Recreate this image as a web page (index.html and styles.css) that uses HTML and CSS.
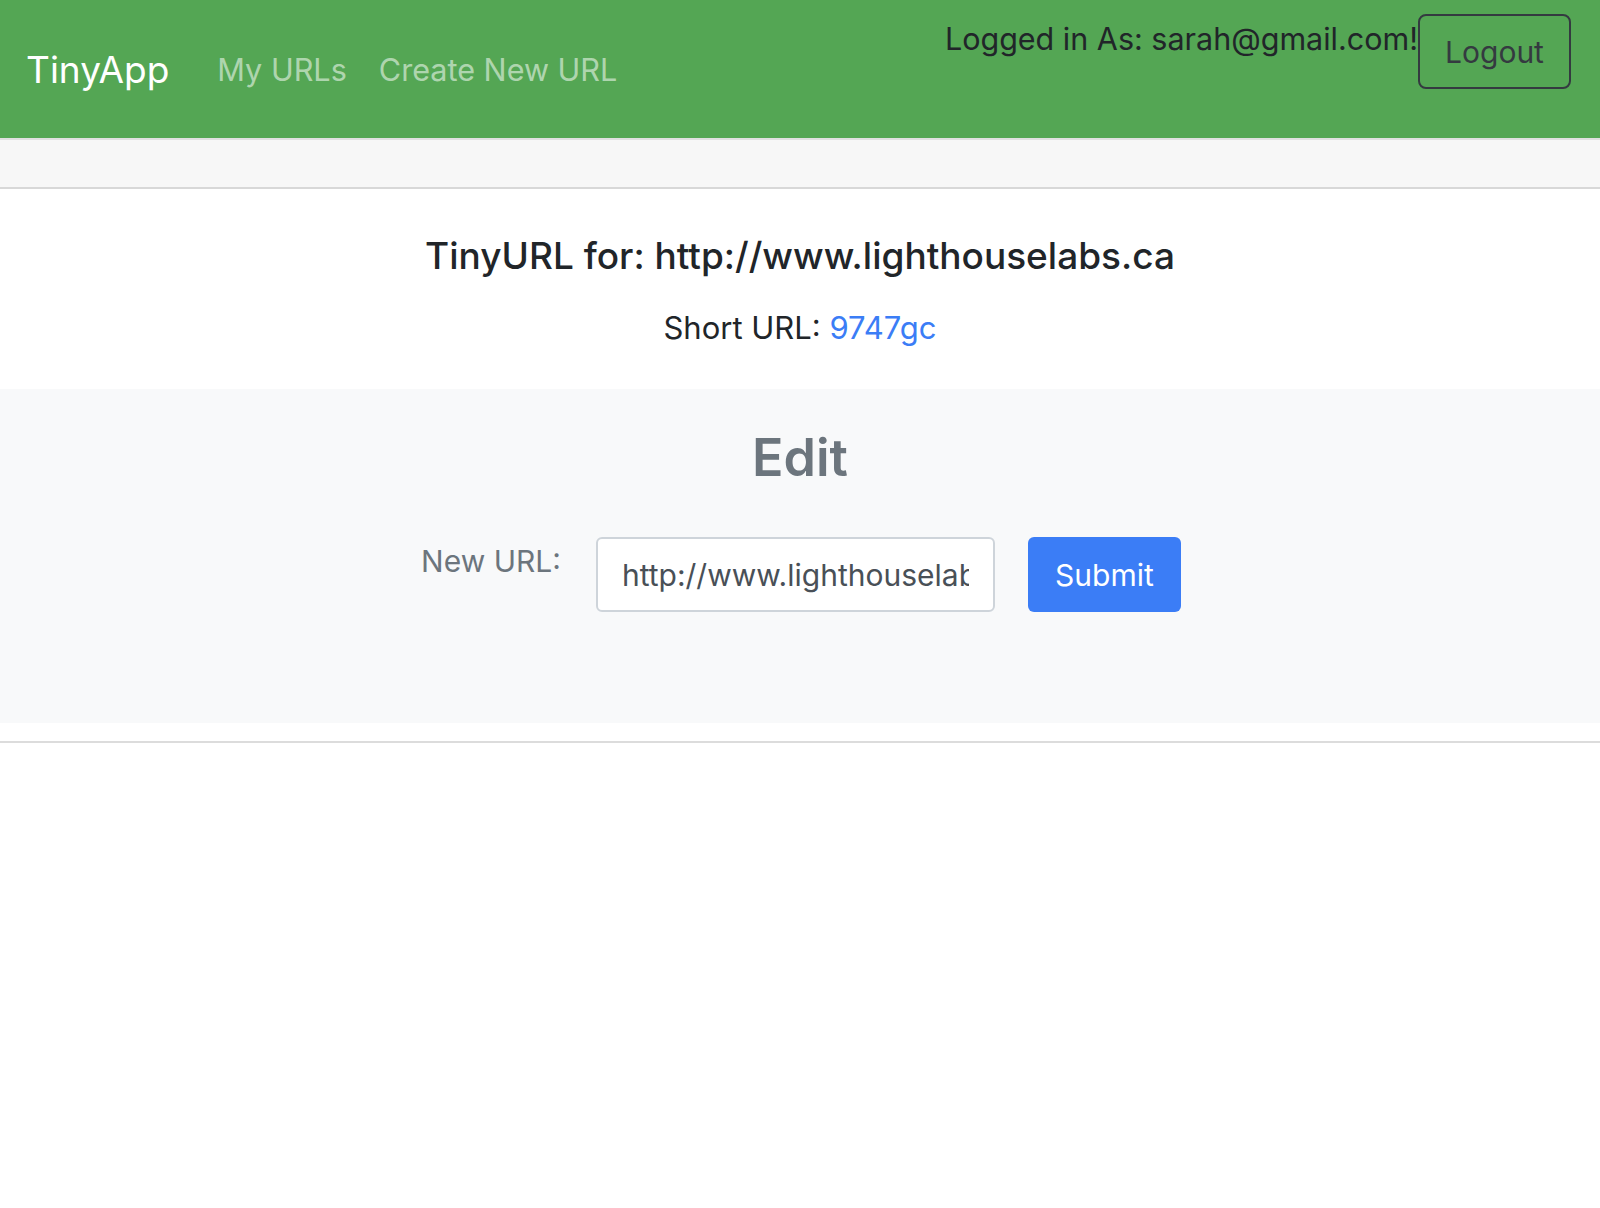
FILE: index.html
```html
<!DOCTYPE html>
<html lang="en">
<head>
<meta charset="utf-8">
<title>TinyApp</title>
<link rel="stylesheet" href="styles.css">
</head>
<body>
<nav class="navbar">
  <div class="nav-left">
    <a class="brand" href="#">TinyApp</a>
    <a class="nav-link" href="#">My URLs</a>
    <a class="nav-link" href="#">Create New URL</a>
  </div>
  <div class="nav-right">
    <span class="logged">Logged in As: sarah@gmail.com!</span>
    <button class="btn-logout" type="button">Logout</button>
  </div>
</nav>
<div class="card">
  <div class="card-header"></div>
  <div class="card-body">
    <h2 class="title">TinyURL for: http://www.lighthouselabs.ca</h2>
    <p class="short">Short URL: <a href="#">9747gc</a></p>
  </div>
  <div class="edit">
    <h2 class="edit-title">Edit</h2>
    <form class="edit-form">
      <label class="edit-label" for="newurl">New URL:</label>
      <input id="newurl" class="edit-input" type="text" value="http://www.lighthouselabs.ca">
      <button class="btn-submit" type="submit">Submit</button>
    </form>
  </div>
  <div class="card-bottom"></div>
</div>
</body>
</html>
```
FILE: styles.css
```css
* { box-sizing: border-box; }
html, body { margin: 0; padding: 0; }
body {
  font-family: Inter, "Helvetica Neue", Arial, sans-serif;
  color: #212529;
  background: #fff;
  font-size: 30px;
}
.navbar {
  height: 138px;
  background: #54a654;
  display: flex;
  justify-content: space-between;
  align-items: center;
  padding: 0 29px 0 26px;
}
.nav-left { display: flex; align-items: center; }
.brand {
  color: #fff;
  text-decoration: none;
  font-size: 37px;
  margin-right: 32px;
}
.nav-link {
  color: rgba(255,255,255,0.55);
  text-decoration: none;
  font-size: 30.6px;
  padding: 0 16px;
}
.nav-right {
  align-self: flex-start;
  margin-top: 14px;
  display: flex;
  align-items: flex-start;
}
.logged {
  font-size: 30.5px;
  line-height: 50px;
  color: #212529;
}
.btn-logout {
  font-family: inherit;
  font-size: 30px;
  color: #343a40;
  background: transparent;
  border: 2px solid #343a40;
  border-radius: 8px;
  width: 153px;
  height: 75px;
  padding: 0;
}
.card {
  border-top: 2px solid #e0e0e0;
  border-bottom: 2px solid #dcdcdc;
  background: #fff;
}
.card-header {
  height: 49px;
  background: #f7f7f7;
  border-bottom: 2px solid #d8d8d8;
}
.card-body {
  text-align: center;
  padding-top: 35px;
  height: 200px;
}
.title {
  margin: 0;
  font-size: 37px;
  font-weight: 500;
  line-height: 64px;
}
.short {
  margin: 10px 0 0;
  font-size: 31px;
  line-height: 60px;
}
.short a { color: #3b7df6; text-decoration: none; }
.edit {
  background: #f8f9fa;
  height: 334px;
  padding-top: 31px;
}
.edit-title {
  margin: 0;
  text-align: center;
  font-size: 52px;
  font-weight: 600;
  color: #6c757d;
  line-height: 76px;
}
.edit-form {
  display: flex;
  justify-content: center;
  align-items: flex-start;
  margin-top: 41px;
}
.edit-label {
  color: #6c757d;
  line-height: 48px;
  margin-right: 35px;
  padding-left: 2px;
}
.edit-input {
  width: 399px;
  height: 75px;
  border: 2px solid #ced4da;
  border-radius: 6px;
  background: #fff;
  padding: 0 24px;
  font-family: inherit;
  font-size: 30px;
  color: #495057;
  margin-right: 33px;
}
.btn-submit {
  width: 153px;
  height: 75px;
  border: none;
  border-radius: 6px;
  background: #3b7df6;
  color: #fff;
  font-family: inherit;
  font-size: 30px;
  padding: 0;
}
.card-bottom { height: 18px; }
```
